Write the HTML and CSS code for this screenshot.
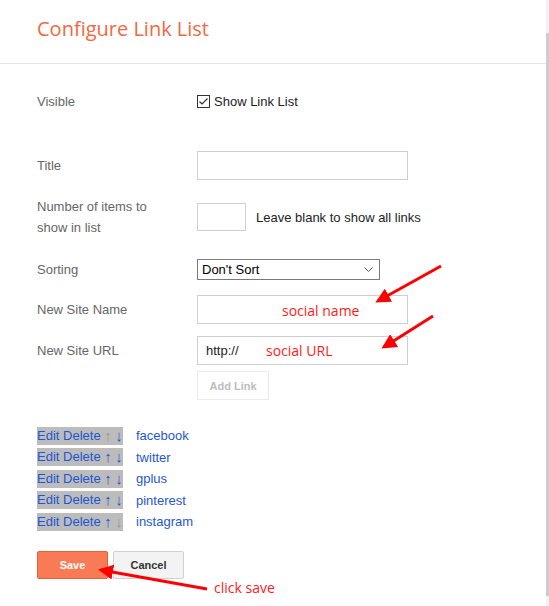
FILE: index.html
```html
<!DOCTYPE html>
<html>
<head>
<meta charset="utf-8">
<link rel="stylesheet" href="styles.css">
</head>
<body>
<div class="page">
  <div class="main">
    <header class="header"><h1 class="title">Configure Link List</h1></header>
    <form class="form">
      <div class="row row-visible">
        <span class="label">Visible</span>
        <label class="check">
          <svg class="checkbox" width="13" height="13" viewBox="0 0 13 13"><rect x="0.5" y="0.5" width="12" height="12" fill="#fff" stroke="#333"/><polyline points="2.5,6.5 5,9 10.5,3.5" fill="none" stroke="#333" stroke-width="1.2"/></svg>
          <span>Show Link List</span>
        </label>
      </div>
      <div class="row row-title">
        <span class="label">Title</span>
        <span class="input wide"></span>
      </div>
      <div class="row row-number">
        <span class="label">Number of items to<br>show in list</span>
        <span class="control-inline"><span class="input small"></span><span class="hint">Leave blank to show all links</span></span>
      </div>
      <div class="row row-sort">
        <span class="label">Sorting</span>
        <span class="select">Don't Sort<svg class="chev" width="9" height="6" viewBox="0 0 9 6"><polyline points="0.5,0.5 4.5,4.5 8.5,0.5" fill="none" stroke="#555" stroke-width="1"/></svg></span>
      </div>
      <div class="row row-name">
        <span class="label">New Site Name</span>
        <span class="input wide"></span>
      </div>
      <div class="row row-url">
        <span class="label">New Site URL</span>
        <span class="input wide url">http://</span>
      </div>
      <div class="row row-add">
        <span></span>
        <span class="btn-add">Add Link</span>
      </div>
      <ul class="links">
        <li><span class="ops"><a>Edit</a> <a>Delete</a> <span class="arr dis">↑</span> <a class="arr">↓</a></span><a class="name">facebook</a></li>
        <li><span class="ops"><a>Edit</a> <a>Delete</a> <a class="arr">↑</a> <a class="arr">↓</a></span><a class="name">twitter</a></li>
        <li><span class="ops"><a>Edit</a> <a>Delete</a> <a class="arr">↑</a> <a class="arr">↓</a></span><a class="name">gplus</a></li>
        <li><span class="ops"><a>Edit</a> <a>Delete</a> <a class="arr">↑</a> <a class="arr">↓</a></span><a class="name">pinterest</a></li>
        <li><span class="ops"><a>Edit</a> <a>Delete</a> <a class="arr">↑</a> <span class="arr dis">↓</span></span><a class="name">instagram</a></li>
      </ul>
      <div class="buttons">
        <span class="btn btn-save">Save</span>
        <span class="btn btn-cancel">Cancel</span>
      </div>
    </form>
  </div>
  <div class="scrollbar"><div class="thumb"></div></div>

  <div class="annotations">
    <svg class="arrows" width="549" height="606" viewBox="0 0 549 606">
      <defs>
        <marker id="head" markerWidth="5" markerHeight="5" refX="4" refY="2.5" orient="auto" markerUnits="strokeWidth">
          <path d="M0,0 L5,2.5 L0,5 Z" fill="#ff0000"/>
        </marker>
      </defs>
      <line x1="441" y1="266" x2="378" y2="301" stroke="#ff0000" stroke-width="3" marker-end="url(#head)"/>
      <line x1="433" y1="316" x2="384" y2="347" stroke="#ff0000" stroke-width="3" marker-end="url(#head)"/>
      <line x1="207" y1="589" x2="101" y2="570" stroke="#ff0000" stroke-width="3" marker-end="url(#head)"/>
    </svg>
    <span class="note note-name">social name</span>
    <span class="note note-url">social URL</span>
    <span class="note note-save">click save</span>
  </div>
</div>
</body>
</html>
```

FILE: styles.css
```css
* { box-sizing: border-box; }
html, body { margin: 0; padding: 0; background: #fff; }
body {
  font-family: "Liberation Sans", Arial, sans-serif;
  font-size: 13px;
  color: #222;
}
.page {
  position: relative;
  display: flex;
  width: 549px;
  height: 606px;
  overflow: hidden;
}
.main { flex: 1; }
.header {
  height: 64px;
  border-bottom: 1px solid #e5e5e5;
  padding: 15px 0 0 37px;
}
.title {
  margin: 0;
  font-family: "Open Sans", sans-serif;
  font-weight: 400;
  font-size: 20px;
  line-height: 27px;
  color: #f4683f;
}
.form { padding: 27px 0 0 37px; }
.row {
  display: grid;
  grid-template-columns: 160px 1fr;
  align-items: center;
}
.label { color: #666; line-height: 21px; }
.row-visible { height: 20px; }
.row-title { margin-top: 40px; }
.row-number { margin-top: 16px; }
.row-sort { margin-top: 21px; }
.row-name { margin-top: 15px; }
.row-url { margin-top: 12px; }
.row-add { margin-top: 6px; }

.check { display: flex; align-items: center; gap: 4px; color: #222; }
.checkbox { display: block; }

.input {
  display: block;
  height: 29px;
  border: 1px solid #cfcfcf;
  background: #fff;
}
.input.wide { width: 211px; }
.input.small { width: 49px; height: 28px; }
.input.url { padding: 0 0 0 8px; line-height: 27px; color: #222; }
.control-inline { display: flex; align-items: center; gap: 10px; }
.hint { color: #222; }

.select {
  position: relative;
  display: block;
  width: 183px;
  height: 21px;
  border: 1px solid #7a7a7a;
  padding-left: 4px;
  line-height: 19px;
  color: #000;
}
.chev { position: absolute; right: 6px; top: 7px; }

.btn-add {
  display: inline-flex;
  align-items: center;
  justify-content: center;
  width: 72px;
  height: 29px;
  border: 1px solid #ebebeb;
  font-size: 11px;
  font-weight: bold;
  color: #bdbdbd;
  justify-self: start;
}

.links { list-style: none; margin: 25px 0 0; padding: 0; }
.links li { height: 21.5px; display: flex; align-items: center; }
.links a { color: #1f56d4; text-decoration: none; }
.ops {
  display: inline-block;
  width: 86px;
  height: 18px;
  line-height: 18px;
  background: #bcbcbc;
  white-space: nowrap;
}
.ops .arr { font-size: 15px; line-height: 18px; vertical-align: top; }
.ops .dis { color: #999; }
.name { margin-left: 13px; }

.buttons { display: flex; gap: 5px; margin-top: 18.5px; }
.btn {
  display: inline-flex;
  align-items: center;
  justify-content: center;
  width: 71px;
  height: 28px;
  font-size: 11px;
  font-weight: bold;
  border-radius: 2px;
}
.btn-save { background: #f97b55; border: 1px solid #e5603b; color: #fff; }
.btn-cancel { background: #f3f3f3; border: 1px solid #d0d0d0; color: #333; }

.scrollbar {
  width: 3px;
  height: 606px;
  background: #f2f2f2;
  padding-top: 33px;
  padding-bottom: 10px;
}
.thumb { height: 100%; background: #cdcdcd; }

.annotations {
  position: absolute;
  left: 0; top: 0;
  width: 549px; height: 606px;
  pointer-events: none;
}
.arrows { position: absolute; left: 0; top: 0; }
.note {
  position: absolute;
  font-family: "Open Sans", sans-serif;
  font-size: 14px;
  line-height: 20px;
  color: #ff1a1a;
  white-space: nowrap;
}
.note-name { left: 282px; top: 301px; }
.note-url { left: 266px; top: 341px; }
.note-save { left: 214px; top: 578px; }
```
